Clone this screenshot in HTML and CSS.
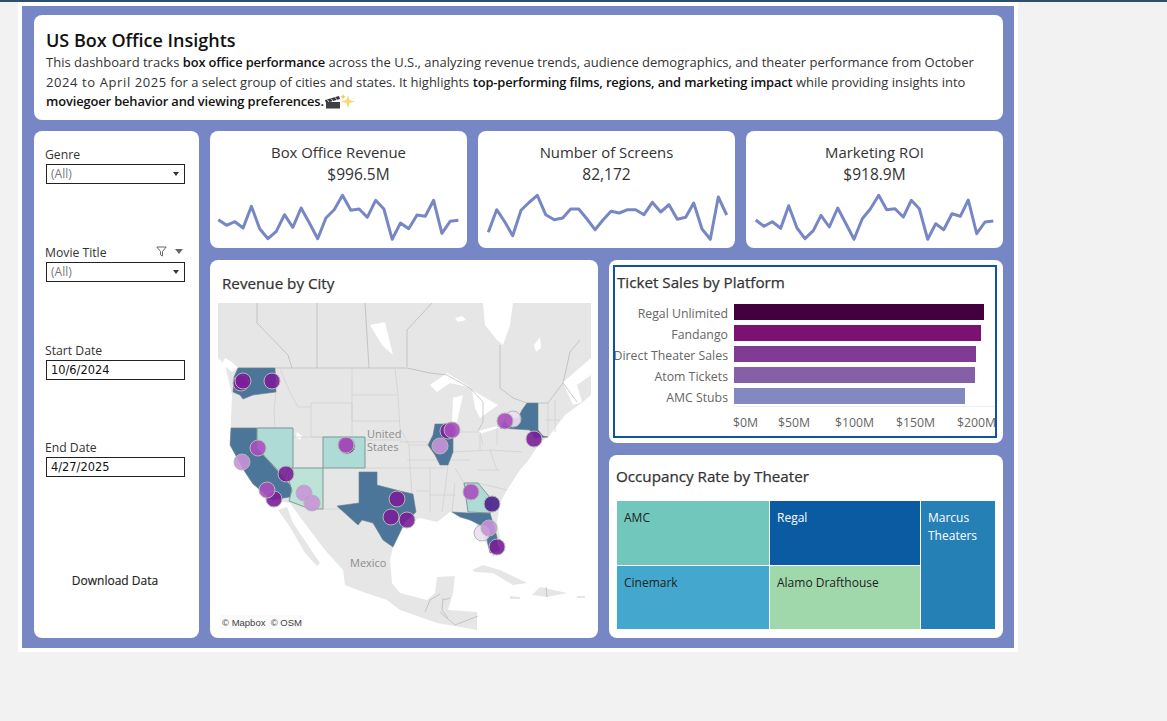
FILE: index.html
```html
<!DOCTYPE html>
<html lang="en">
<head>
    <meta charset="UTF-8">
    <meta name="viewport" content="width=device-width, initial-scale=1.0">
    <title>US Box Office Insights</title>
    <link rel="stylesheet" href="styles.css">
</head>
<body>
    <div class="top-bar"></div>
    <div class="frame">
        <div class="dashboard">
            <header class="card intro">
                <h1>US Box Office Insights</h1>
                <p>This dashboard tracks <b>box office performance</b> across the U.S., analyzing revenue trends, audience demographics, and theater performance from October <span class="dates">2024 to April 2025</span> for a select group of cities and states. It highlights <b>top-performing films, regions, and marketing impact</b> while providing insights into <b>moviegoer behavior and viewing preferences.</b><svg class="emoji" viewBox="0 0 32 16" width="32" height="16" aria-hidden="true">
                    <path d="M1 7 L15 3 L16 6 L2 10 Z" fill="#33333a"/>
                    <path d="M3 6.5 L5 9 M7 5.5 L9 8 M11 4.3 L13 6.8" stroke="#e5e5e5" stroke-width="1"/>
                    <rect x="2" y="9" width="14" height="6.5" fill="#3f3f46"/>
                    <path d="M24 2 L25.5 7 L31 8.5 L25.5 10 L24 15 L22.5 10 L17 8.5 L22.5 7 Z" fill="#f7d774"/>
                    <path d="M19 1 L19.8 3 L22 3.8 L19.8 4.6 L19 6.5 L18.2 4.6 L16.5 3.8 L18.2 3 Z" fill="#f3c64d"/>
                </svg></p>
            </header>

            <div class="main-row">
                <aside class="card filters">
                    <div class="filter">
                        <div class="filter-label">Genre</div>
                        <div class="filter-box muted">(All)<span class="caret"></span></div>
                    </div>
                    <div class="filter">
                        <div class="filter-label">Movie Title
                            <span class="filter-tools">
                                <svg viewBox="0 0 11 11" width="11" height="11" aria-hidden="true"><path d="M0.8 1 H10.2 L6.5 5.5 V10 L4.5 8.8 V5.5 Z" fill="none" stroke="#555" stroke-width="0.9"/></svg>
                                <span class="caret grey"></span>
                            </span>
                        </div>
                        <div class="filter-box muted">(All)<span class="caret"></span></div>
                    </div>
                    <div class="filter short">
                        <div class="filter-label">Start Date</div>
                        <div class="filter-box date">10/6/2024</div>
                    </div>
                    <div class="filter">
                        <div class="filter-label">End Date</div>
                        <div class="filter-box date">4/27/2025</div>
                    </div>
                    <div class="download">Download Data</div>
                </aside>

                <div class="content">
                    <section class="kpi-row">
                        <div class="card kpi">
                            <div class="kpi-title">Box Office Revenue</div>
                            <div class="kpi-value shifted">$996.5M</div>
                            <svg class="spark" viewBox="210 190 257 58" width="257" height="58" aria-hidden="true">
                                <polyline points="218.3,221.7 226.6,227.3 234.9,223.7 243.1,230 251.4,208.3 259.7,230.7 268,240.7 276.3,233.3 284.5,216.7 292.8,229.3 301.1,210 309.4,225 317.7,240.7 325.9,220 334.2,211.7 342.5,197.3 350.8,212.3 359.1,211 367.3,219.3 375.6,202.3 383.9,211 392.2,241.3 400.5,225 408.7,230.7 417,217 425.3,218.3 433.6,202.3 441.9,235.3 450.1,223.3 458.4,222.3"/>
                            </svg>
                        </div>
                        <div class="card kpi">
                            <div class="kpi-title">Number of Screens</div>
                            <div class="kpi-value">82,172</div>
                            <svg class="spark" viewBox="478 190 257 58" width="257" height="58" aria-hidden="true">
                                <polyline points="488.3,234.3 496.7,211.7 504.9,224 512.7,237.7 521,212.3 529,204.5 537.3,197.3 545.7,216.7 554.3,221.7 562.7,220 570.7,211 578.7,211 587,221 595,231.7 603,222 611,213.3 619.3,215 627.7,211.7 635.7,211.7 644,216.7 652.3,204.3 660.7,214 669,206.7 677.3,221.3 685.7,219.3 693.7,205 702,231 710.3,241.3 718.3,199 726.7,217"/>
                            </svg>
                        </div>
                        <div class="card kpi">
                            <div class="kpi-title">Marketing ROI</div>
                            <div class="kpi-value">$918.9M</div>
                            <svg class="spark" viewBox="746 190 257 58" width="257" height="58" aria-hidden="true">
                                <polyline points="755.7,222 764,228.3 772.3,223.7 780.7,230.3 788.7,207.7 797,230 805,240.7 813.3,232.7 821,217.3 829.3,229 837.7,210 846,225.7 854,241.3 862.3,220.7 870.3,211 878.7,197.3 886.7,211.7 895,210.7 903.3,219 911.3,202.3 919.3,210.7 927.7,241.3 935.7,225.7 943.7,231.7 952,215.7 960.3,218.3 968.3,202 976.7,235.7 985,224 993.3,223"/>
                            </svg>
                        </div>
                    </section>

                    <section class="lower-row">
                        <div class="card map-card">
                            <h2>Revenue by City</h2>
                            <svg class="map" viewBox="218 303 373 328" width="373" height="328" role="img" aria-label="Map of revenue by city">
                                <!-- land -->
                                <polygon class="land" points="218,303 591,303 591,395 583,402 565,415 550,435 540,443 527,462 520,470 507,490 500,503 497,523 503,550 493,557 487,545 480,533 473,517 460,513 450,512 437,522 420,518 405,524 393,547 390,560 392,583 400,593 427,600 435,593 437,577 455,576 453,593 448,610 477,612 477,630 437,623 420,617 400,610 387,600 363,592 345,585 343,570 325,550 300,517 290,503 273,500 253,484 245,472 230,445 232,395 225,365 218,358"/>
                                <polygon class="land" points="287,507 293,523 320,563 317,566 305,553 290,527 278,510"/>
                                <polygon class="land" points="472,570 483,565 500,570 527,583 513,585 493,573 475,572"/>
                                <polygon class="land" points="540,587 567,593 547,597 532,595"/>
                                <polygon class="land" points="510,596 520,597 520,599 510,599"/>
                                <polygon class="land" points="577,596 585,596 585,598 577,598"/>
                                <!-- water -->
                                <polygon class="water" points="483,303 513,303 510,325 503,345 497,340 485,325"/>
                                <polygon class="water" points="430,385 447,373 472,388 450,383 437,392"/>
                                <polygon class="water" points="453,398 463,395 457,422 452,423"/>
                                <polygon class="water" points="472,390 498,405 480,418 475,408"/>
                                <polygon class="water" points="478,431 497,426 498,428 480,434"/>
                                <polygon class="water" points="560,385 591,358 591,375 577,385 582,402 573,405 563,383"/>
                                <polygon class="water" points="370,325 385,322 393,355 382,345"/>
                                <polygon class="water" points="225,358 232,362 238,368 232,372 222,364"/>
                                <polygon class="water" points="297,432 302,436 300,440 296,437"/>
                                <polygon class="water" points="534,345 540,337 541,348 536,352"/>
                                <polygon class="water" points="455,318 462,316 466,320 458,322"/>
                                <!-- borders -->
                                <path class="border" d="M257 303 V323 L288 355 L292 368 M317 303 V368 M365 303 L369 368 M432 303 L407 330 V367 M500 345 V388 L513 398 L527 403 M238 368 H407 L430 373 L447 375 L470 388 L483 402 L483 422 L478 431 M497 427 L505 420 M538 403 H548 L563 383 L577 402 M563 383 L570 352 L580 340"/>
                                <path class="state" d="M280 369 L290 392 L298 407 L311 407 M276 392 L274 410 L275 428 M231 428 H293 M311 403 H352 V437 H311 Z M352 369 V421 M352 395 H397 M352 421 H400 M395 369 L398 395 L400 428 L409 445 L410 468 M365 440 H402 M293 437 H323 M365 468 H410 M323 509 H359 M377 485 V472 M410 468 L412 493 M410 468 H446 M416 491 L430 491 M428 445 L409 445 M430 468 L430 512 M448 465 L445 490 M445 490 L442 512 M453 452 L490 450 M453 432 H480 L483 445 M464 483 L455 468 M478 483 L507 490 M490 450 L522 452 M497 428 V445 M500 470 L478 470 M548 403 V437 M555 400 V432"/>
                                <path class="state" d="M407 460 H470 M430 495 H456 M452 512 L455 483 M400 442 H428 M480 434 L480 450 M490 450 L497 470 M545 420 H560"/>
                                <path class="border" d="M443 598 L442 610 L448 618 M443 600 L450 598 M425 612 L430 600 L440 594 M440 612 L455 625 L478 616 M546 587 L547 597"/>
                                <!-- states -->
                                <polygon class="state-dark" points="238,368 275,368 276,392 253,395 243,399 240,395 233,392 234,377"/>
                                <polygon class="state-dark" points="231,428 257,428 257,448 292,487 290,497 272,500 253,484 245,472 230,445"/>
                                <polygon class="state-dark" points="359,472 377,472 377,485 400,491 413,494 416,512 405,522 393,547 383,540 373,523 362,520 358,525 337,506 359,503"/>
                                <polygon class="state-dark" points="435,424 448,424 453,432 453,452 448,465 440,465 435,455 428,445 433,435"/>
                                <polygon class="state-dark" points="527,403 538,403 538,430 543,436 548,437 535,438 530,430 500,428 505,420 518,418 522,410"/>
                                <polygon class="state-dark" points="452,512 468,513 490,513 497,537 497,543 500,550 490,553 487,540 480,525 470,520 460,517"/>
                                <polygon class="state-teal" points="257,428 293,428 293,467 288,470 285,478 257,448"/>
                                <polygon class="state-teal light" points="293,468 323,468 323,509 310,509 289,501 292,490 288,478"/>
                                <polygon class="state-teal" points="323,437 365,437 365,468 323,468"/>
                                <polygon class="state-teal" points="464,483 478,483 492,500 490,513 468,512"/>
                                <!-- city marks -->
                                <circle class="pin dark" cx="241" cy="383" r="8"/>
                                <circle class="pin dark" cx="243" cy="381" r="8"/>
                                <circle class="pin dark" cx="272" cy="381" r="8"/>
                                <circle class="pin mid" cx="258" cy="448" r="8"/>
                                <circle class="pin light" cx="242" cy="462" r="8"/>
                                <circle class="pin dark" cx="286" cy="474" r="8"/>
                                <circle class="pin dark" cx="274" cy="499" r="8"/>
                                <circle class="pin mid" cx="267" cy="490" r="8"/>
                                <circle class="pin light" cx="312" cy="503" r="8"/>
                                <circle class="pin light" cx="304" cy="493" r="8"/>
                                <circle class="pin indigo" cx="347" cy="446" r="8"/>
                                <circle class="pin mid" cx="346" cy="445" r="8"/>
                                <circle class="pin dark" cx="397" cy="499" r="8"/>
                                <circle class="pin dark" cx="407" cy="520" r="8"/>
                                <circle class="pin dark" cx="391" cy="517" r="8"/>
                                <circle class="pin dark" cx="448" cy="431" r="8"/>
                                <circle class="pin mid" cx="452" cy="430" r="8"/>
                                <circle class="pin light" cx="440" cy="446" r="8"/>
                                <circle class="pin pale" cx="513" cy="419" r="8"/>
                                <circle class="pin mid" cx="505" cy="421" r="8"/>
                                <circle class="pin dark" cx="534" cy="439" r="8"/>
                                <circle class="pin mid" cx="471" cy="492" r="8"/>
                                <circle class="pin indigo" cx="492" cy="504" r="8"/>
                                <circle class="pin pale" cx="482" cy="533" r="8"/>
                                <circle class="pin light" cx="489" cy="528" r="8"/>
                                <circle class="pin dark" cx="497" cy="547" r="8"/>
                                <!-- labels -->
                                <text class="place" x="367" y="438">United</text>
                                <text class="place" x="367" y="451">States</text>
                                <text class="place" x="350" y="567">Mexico</text>
                                <rect class="credit-bg" x="220" y="615" width="83" height="14"/>
                                <text class="credit" x="222" y="626">© Mapbox  © OSM</text>
                            </svg>
                        </div>

                        <div class="side-charts">
                            <div class="card ticket-card">
                                <div class="ticket-inner">
                                    <h2>Ticket Sales by Platform</h2>
                                    <div class="bar-row"><span class="bar-label">Regal Unlimited</span><span class="bar" style="width:250px;background:#42003f"></span></div>
                                    <div class="bar-row"><span class="bar-label">Fandango</span><span class="bar" style="width:247px;background:#7b1272"></span></div>
                                    <div class="bar-row"><span class="bar-label">Direct Theater Sales</span><span class="bar" style="width:242px;background:#813b94"></span></div>
                                    <div class="bar-row"><span class="bar-label">Atom Tickets</span><span class="bar" style="width:241px;background:#8560a6"></span></div>
                                    <div class="bar-row"><span class="bar-label">AMC Stubs</span><span class="bar" style="width:231px;background:#8289c0"></span></div>
                                    <div class="axis">
                                        <span class="tick t0">$0M</span>
                                        <span class="tick t1">$50M</span>
                                        <span class="tick t2">$100M</span>
                                        <span class="tick t2">$150M</span>
                                        <span class="tick t3">$200M</span>
                                    </div>
                                </div>
                            </div>
                            <div class="card occupancy-card">
                                <h2>Occupancy Rate by Theater</h2>
                                <div class="treemap">
                                    <div class="tile amc">AMC</div>
                                    <div class="tile regal">Regal</div>
                                    <div class="tile marcus">Marcus Theaters</div>
                                    <div class="tile cinemark">Cinemark</div>
                                    <div class="tile alamo">Alamo Drafthouse</div>
                                </div>
                            </div>
                        </div>
                    </section>
                </div>
            </div>
        </div>
    </div>
</body>
</html>
```

FILE: styles.css
```css
body {
    margin: 0;
    padding: 0;
    background: #f2f2f2;
    font-family: "Open Sans", "Liberation Sans", sans-serif;
    color: #2e2e2e;
}
.top-bar {
    height: 2px;
    background: #2d4f6c;
}
.frame {
    width: 992px;
    margin-left: 18px;
    padding: 4px;
    background: #fff;
}
.dashboard {
    height: 642px;
    box-sizing: border-box;
    padding: 9px 11px 10px 12px;
    background: #7787c5;
}
.card {
    background: #fff;
    border-radius: 8px;
}
h2 {
    margin: 0;
    font-size: 15.2px;
    font-weight: 400;
    color: #333;
    -webkit-text-stroke: 0.25px #333;
}

/* intro */
.intro {
    height: 105px;
    box-sizing: border-box;
    padding: 14px 12px 0;
}
.intro h1 {
    margin: 0;
    font-size: 18px;
    line-height: 22px;
    font-weight: 600;
    color: #111;
}
.intro p {
    margin: 2px 0 0;
    font-size: 13px;
    line-height: 19.5px;
    color: #333;
}
.intro b {
    font-size: 12.9px;
    font-weight: 600;
    letter-spacing: -0.13px;
    color: #111;
}
.dates {
    letter-spacing: 0.6px;
}
.emoji {
    vertical-align: -3px;
}

.main-row {
    display: flex;
    gap: 11px;
    height: 507px;
    margin-top: 11px;
}

/* filters */
.filters {
    width: 165px;
    flex-shrink: 0;
    box-sizing: border-box;
    padding: 16px 14px 0 11px;
}
.filter {
    height: 98px;
}
.filter.short {
    height: 97px;
}
.filter-label {
    display: flex;
    justify-content: space-between;
    align-items: center;
    height: 17px;
    box-sizing: border-box;
    padding-bottom: 2px;
    font-size: 12.2px;
    color: #333;
}
.filter-tools {
    display: flex;
    align-items: center;
    gap: 8px;
    margin-right: 1px;
    margin-top: -2px;
}
.filter-box {
    display: flex;
    justify-content: space-between;
    align-items: center;
    width: 139px;
    height: 20px;
    margin-left: 1px;
    box-sizing: border-box;
    padding: 0 4px 1px 4px;
    border: 1px solid #222;
    font-size: 12px;
}
.muted {
    color: #777;
}
.date {
    padding-bottom: 0;
    font-family: "DejaVu Sans", sans-serif;
    font-size: 11.4px;
    color: #111;
}
.caret {
    width: 0;
    height: 0;
    margin-top: 1px;
    margin-right: 1px;
    border-left: 3.5px solid transparent;
    border-right: 3.5px solid transparent;
    border-top: 4px solid #333;
}
.caret.grey {
    margin-top: 0;
    border-left-width: 4px;
    border-right-width: 4px;
    border-top: 5px solid #666;
}
.download {
    margin-top: 34px;
    text-align: center;
    font-size: 12px;
    color: #222;
    -webkit-text-stroke: 0.15px #222;
}

/* kpi */
.content {
    flex: 1;
    min-width: 0;
}
.kpi-row {
    display: flex;
    gap: 11px;
    height: 117px;
}
.kpi {
    flex: 1;
    overflow: hidden;
    text-align: center;
}
.kpi-title {
    margin-top: 11px;
    font-size: 14.9px;
    line-height: 20px;
    color: #333;
}
.kpi-value {
    margin-top: 1px;
    font-size: 15.5px;
    line-height: 22px;
    color: #333;
}
.kpi-value.shifted {
    padding-left: 40px;
}
.spark {
    display: block;
    margin-top: 3px;
}
.spark polyline {
    fill: none;
    stroke: #7787c5;
    stroke-width: 3;
    stroke-linejoin: round;
}

/* lower part */
.lower-row {
    display: flex;
    gap: 11px;
    height: 378px;
    margin-top: 12px;
}
.map-card {
    flex: 0 0 388px;
    box-sizing: border-box;
    padding: 13px 0 0 8px;
}
.map-card h2 {
    height: 30px;
    padding-left: 4px;
    line-height: 20px;
}
.map {
    display: block;
}
.land {
    fill: #e6e6e6;
}
.water {
    fill: #fff;
    filter: blur(0.5px);
}
.border {
    fill: none;
    stroke: #b4b4b4;
    stroke-width: 0.7;
}
.state {
    fill: none;
    stroke: #cfcfcf;
    stroke-width: 0.7;
}
.state-dark {
    fill: #4b7699;
    stroke: #6f7f8c;
    stroke-width: 0.6;
}
.state-teal {
    fill: #aedbd5;
    stroke: #7d9a96;
    stroke-width: 1;
}
.state-teal.light {
    fill: #bde3d8;
}
.pin {
    stroke: #b5b5b5;
    stroke-width: 1;
}
.pin.dark {
    fill: #7a1f98;
    fill-opacity: 0.9;
}
.pin.mid {
    fill: #a94fbe;
    fill-opacity: 0.9;
}
.pin.light {
    fill: #c893d8;
    fill-opacity: 0.9;
}
.pin.pale {
    fill: #ecdff1;
    fill-opacity: 0.9;
}
.pin.indigo {
    fill: #4f2a8f;
    fill-opacity: 0.95;
}
.place {
    font-size: 11px;
    fill: #8c8c8c;
}
.credit-bg {
    fill: #fafafa;
}
.credit {
    font-family: "Liberation Sans", sans-serif;
    font-size: 9.5px;
    fill: #444;
    white-space: pre;
}

.side-charts {
    display: flex;
    flex-direction: column;
    gap: 12px;
    flex: 0 0 394px;
    min-width: 0;
}
.ticket-card {
    height: 183px;
    box-sizing: border-box;
    padding: 5px 6px 5px 4px;
}
.ticket-inner {
    height: 100%;
    box-sizing: border-box;
    overflow: hidden;
    border: 2px solid #0f54a0;
    padding-top: 5px;
}
.ticket-inner h2 {
    height: 32px;
    padding-left: 2px;
    line-height: 20px;
}
.bar-row {
    display: flex;
    align-items: center;
    gap: 6px;
    height: 16px;
    margin-bottom: 5px;
}
.bar-label {
    flex: 0 0 113px;
    overflow: hidden;
    padding-top: 2px;
    direction: rtl;
    white-space: nowrap;
    font-size: 12.3px;
    color: #666;
}
.bar {
    height: 16px;
}
.axis {
    display: flex;
    height: 26px;
    margin-left: 118px;
    margin-top: -3px;
    padding-top: 5px;
    border-top: 1px solid #eee;
    font-size: 12.3px;
    line-height: 22px;
    color: #666;
    white-space: nowrap;
}
.t0 {
    flex: 0 0 45px;
}
.t1 {
    flex: 0 0 57px;
}
.t2 {
    flex: 0 0 61px;
}
.occupancy-card {
    height: 183px;
    box-sizing: border-box;
    padding: 11px 8px 9px;
}
.occupancy-card h2 {
    height: 35px;
    margin-left: -1px;
    line-height: 20px;
}
.treemap {
    display: grid;
    grid-template-columns: 152px 150px 74px;
    grid-template-rows: 64px 63px;
    gap: 1px;
    font-size: 12px;
    line-height: 18px;
}
.tile {
    padding: 8px 7px;
    color: #1e1e1e;
}
.amc {
    background: #72c7bc;
}
.regal {
    background: #0b5ba3;
    color: #fff;
}
.marcus {
    grid-row: span 2;
    background: #2580b6;
    color: #fff;
}
.cinemark {
    background: #44a8ce;
}
.alamo {
    background: #a0d8ab;
}
```
